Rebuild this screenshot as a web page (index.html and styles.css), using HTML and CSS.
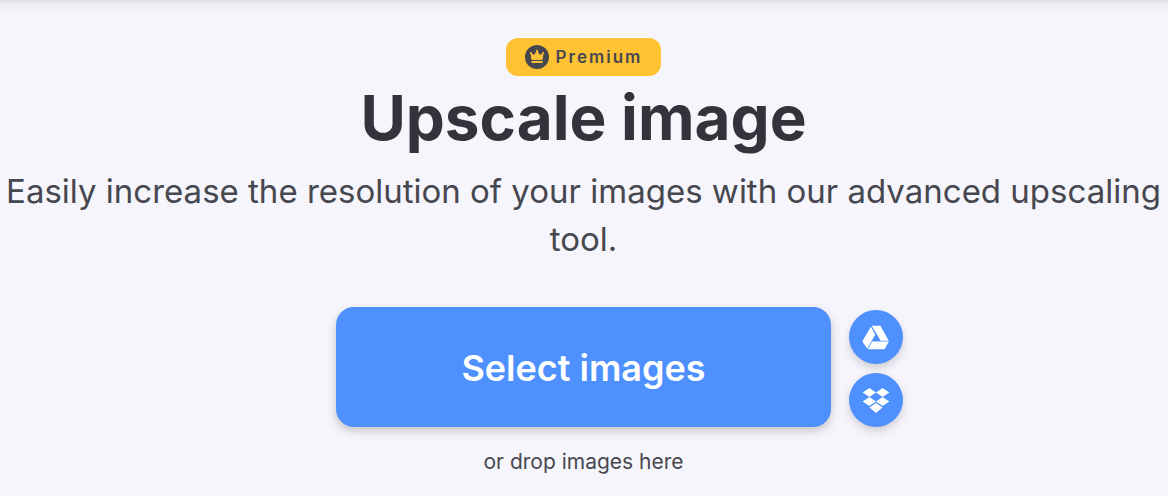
FILE: index.html
```html
<!DOCTYPE html>
<html lang="en">
<head>
<meta charset="utf-8">
<meta name="viewport" content="width=device-width, initial-scale=1">
<title>Upscale image</title>
<link rel="stylesheet" href="styles.css">
</head>
<body>
<main class="tool">
  <span class="badge">
    <svg class="badge-icon" viewBox="0 0 24 24" aria-hidden="true">
      <circle cx="12" cy="12" r="12" fill="#47474f"/>
      <path d="M6 8.400l3.300 2.200L12 6l2.700 4.600L18 8.400l-.900 6H6.900z" fill="#ffc233" stroke="#ffc233" stroke-width="1" stroke-linejoin="round"/>
      <circle cx="5.900" cy="7.900" r="1" fill="#ffc233"/>
      <circle cx="12" cy="5.700" r="1" fill="#ffc233"/>
      <circle cx="18.100" cy="7.900" r="1" fill="#ffc233"/>
      <path d="M6.500 16h11v2h-11z" fill="#ffc233"/>
    </svg>
    Premium
  </span>
  <h1 class="title">Upscale image</h1>
  <p class="subtitle">Easily increase the resolution of your images with our advanced upscaling tool.</p>
  <div class="actions">
    <button class="select" type="button">Select images</button>
    <div class="sources">
      <button class="source" type="button" aria-label="Select from Google Drive">
        <svg viewBox="0 -1 28 24" aria-hidden="true" fill="#fff">
          <path d="M9.700-.3h8.700l8.300 15h-8z"/>
          <path d="M8.900.8l4.400 7.700L5.200 22.700.300 15.300z"/>
          <path d="M10.100 15.500h16.800l-4.300 7.700H5.900z"/>
        </svg>
      </button>
      <button class="source" type="button" aria-label="Select from Dropbox">
        <svg viewBox="0 -1 28 24" aria-hidden="true" fill="#fff">
          <path d="M7.400-1l6.600 4.500-6.600 4.500L.7 3.500zM20.600-1l6.700 4.500L20.600 8 14 3.500zM7.400 8l6.600 4.500L7.400 17 .7 12.500zM20.600 8l6.700 4.500-6.700 4.500-6.600-4.500zM14 14l6.500 4.400L14 24l-6.500-5.600z"/>
        </svg>
      </button>
    </div>
  </div>
  <p class="hint">or drop images here</p>
</main>
</body>
</html>
```

FILE: styles.css
```css
* {
  box-sizing: border-box;
}

body {
  margin: 0;
  background: #f5f5fb;
  color: #47474f;
  font-family: Inter, "Liberation Sans", sans-serif;
}

.tool {
  display: flex;
  flex-direction: column;
  align-items: center;
  padding: 38px 1px 16px 0;
  background: linear-gradient(#dcdce2, #ededf2 4px, #f5f5fb 14px);
  text-align: center;
}

.badge {
  display: flex;
  align-items: center;
  gap: 7px;
  height: 38px;
  padding: 0 19px;
  border-radius: 12px;
  background: #ffc233;
  font-size: 17px;
  font-weight: 600;
  letter-spacing: 2px;
}

.badge-icon {
  width: 24px;
  height: 24px;
}

.title {
  margin: 6px 0 0;
  color: #33333b;
  font-size: 62px;
  font-weight: 700;
  line-height: 72px;
}

.subtitle {
  margin: 13px 0 0;
  font-size: 33px;
  line-height: 48px;
}

.actions {
  display: grid;
  grid-template-columns: 1fr minmax(0, 495px) 1fr;
  column-gap: 18px;
  align-items: end;
  width: 100%;
  margin-top: 44px;
}

.select {
  grid-column: 2;
  padding: 37px 24px 35px;
  border: 0;
  border-radius: 18px;
  background: #4d90fe;
  box-shadow: 0 4px 10px rgba(0, 0, 0, 0.2);
  color: #fff;
  font: inherit;
  font-size: 36px;
  font-weight: 600;
  line-height: 48px;
  cursor: pointer;
}

.sources {
  display: flex;
  flex-direction: column;
  gap: 9px;
}

.source {
  display: grid;
  place-items: center;
  width: 54px;
  height: 54px;
  padding: 0;
  border: 0;
  border-radius: 50%;
  background: #4d90fe;
  box-shadow: 0 4px 8px rgba(0, 0, 0, 0.16);
  cursor: pointer;
}

.source svg {
  width: 28px;
  height: 24px;
  overflow: visible;
}

.hint {
  margin: 20px 0 0;
  font-size: 21px;
  line-height: 30px;
}
```
